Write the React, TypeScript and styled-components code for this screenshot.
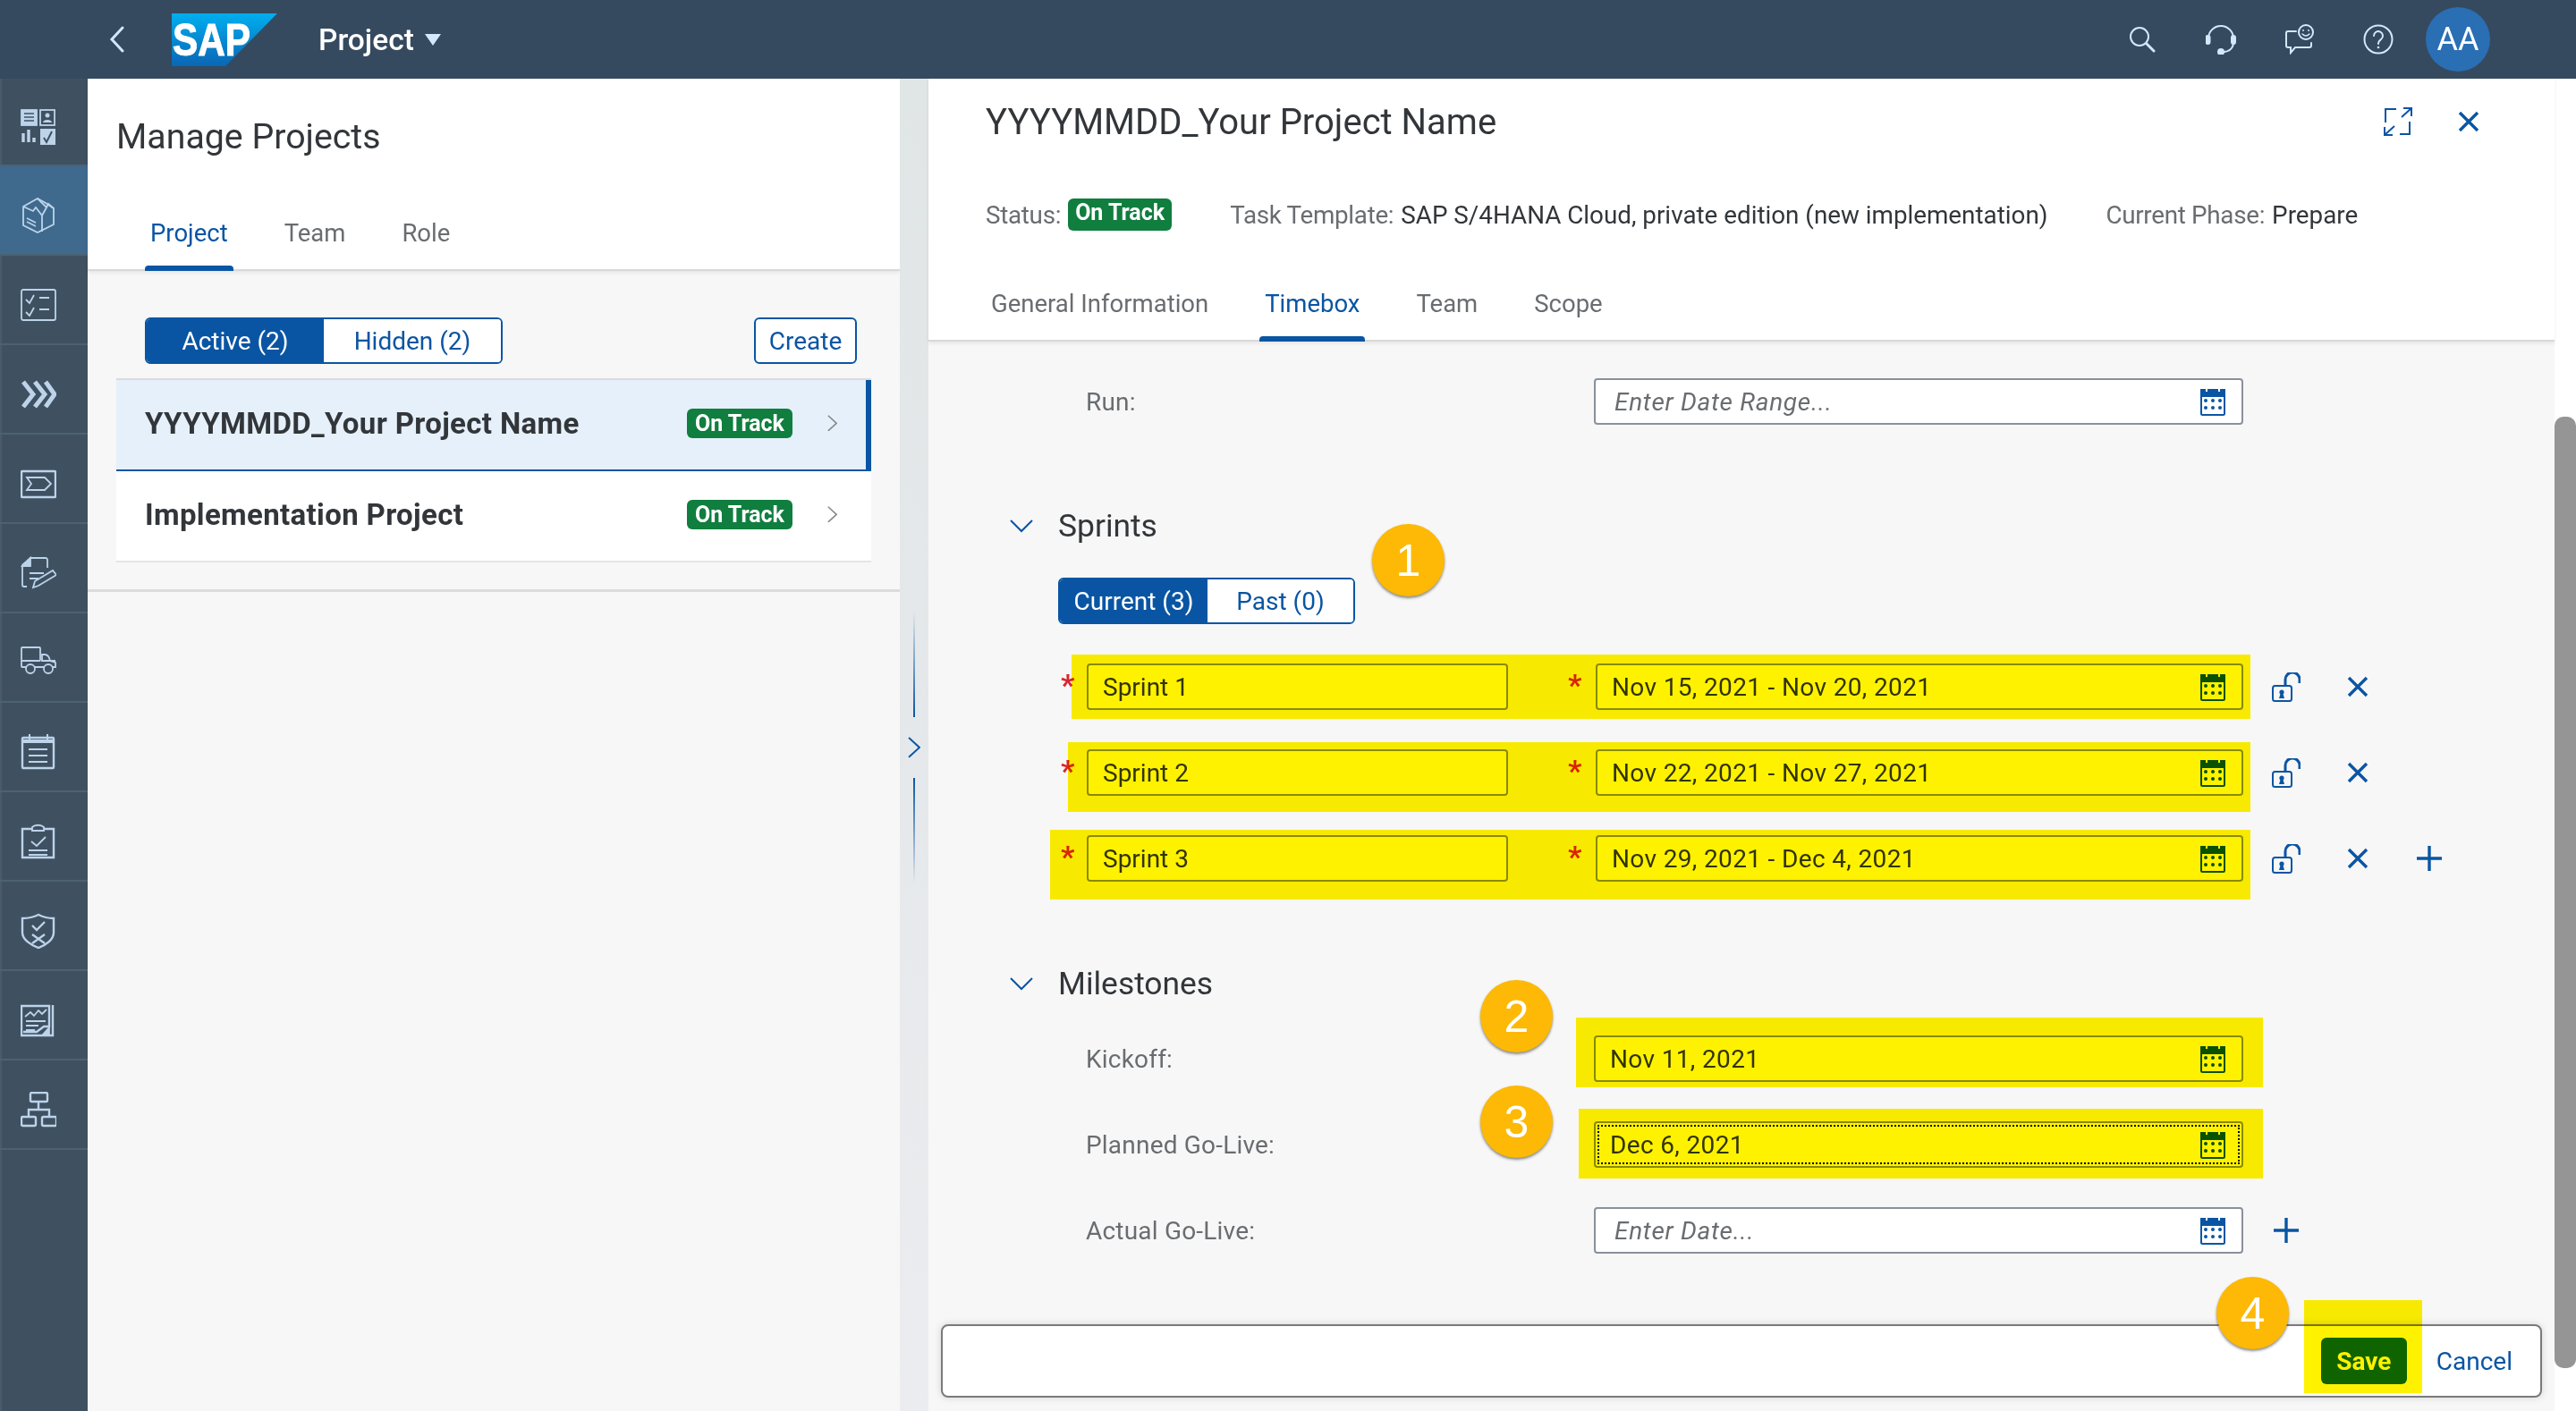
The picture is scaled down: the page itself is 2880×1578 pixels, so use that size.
import React from 'react'
import styled, { createGlobalStyle } from 'styled-components'

const GlobalStyle = createGlobalStyle`
    html, body {
        margin: 0;
        padding: 0;
        background: #fff;
    }
    body {
        font-family: Roboto, "Liberation Sans", sans-serif;
        color: #32363a;
    }
    * {
        box-sizing: border-box;
    }
`

const blue = '#0a55a3'
const grey = '#6a6d70'

const Page = styled.div`
    width: 2880px;
    height: 1578px;
    display: flex;
    flex-direction: column;
    overflow: hidden;
`

const ShellBar = styled.header`
    height: 88px;
    flex: none;
    display: flex;
    align-items: center;
    background: #354a5f;
    color: #d1e8ff;
`

const BackButton = styled.div`
    display: flex;
    margin-left: 122px;
    margin-right: 52px;
`

const ShellTitle = styled.span`
    margin-left: 46px;
    font-size: 33.5px;
    font-weight: 500;
    color: #fff;
`

const TitleCaret = styled.span`
    margin-left: 12px;
    width: 0;
    height: 0;
    border-left: 9px solid transparent;
    border-right: 9px solid transparent;
    border-top: 13px solid #d1e8ff;
`

const ShellActions = styled.div`
    margin-left: auto;
    display: flex;
    align-items: center;
    margin-right: 96px;
`

const ShellAction = styled.div`
    width: 88px;
    display: flex;
    justify-content: center;
`

const Avatar = styled.div`
    width: 72px;
    height: 72px;
    margin-left: 9px;
    border-radius: 50%;
    background: #2a6eb4;
    color: #fff;
    font-size: 36px;
    display: flex;
    align-items: center;
    justify-content: center;
`

const Workspace = styled.div`
    flex: 1;
    display: flex;
    min-height: 0;
`

const SideNav = styled.nav`
    width: 98px;
    flex: none;
    background: #3f5161;
    border-left: 2px solid #4a5c6b;
    color: #bcd3ea;
`

const NavItem = styled.div<{ $selected?: boolean; $tall?: boolean }>`
    height: ${(p) => (p.$tall ? 98 : 100)}px;
    margin-left: -2px;
    padding: 11px 16px 0 4px;
    display: flex;
    align-items: center;
    justify-content: center;
    background: ${(p) => (p.$selected ? '#3f6a8e' : 'transparent')};
    border-bottom: 2px solid #4c6273;
`

const ListPane = styled.section`
    width: 908px;
    flex: none;
    background: #f7f7f7;
`

const ListHeader = styled.div`
    height: 215px;
    background: #fff;
    border-bottom: 2px solid #d9d9d9;
    box-shadow: 0 2px 4px rgba(0, 0, 0, 0.08);
    padding: 0 32px;
    display: flex;
    flex-direction: column;
`

const ListTitle = styled.h1`
    margin: 41px 0 0;
    font-size: 39.3px;
    font-weight: 400;
    line-height: 48px;
`

const Tabs = styled.div<{ $offset: number }>`
    margin-top: auto;
    margin-left: ${(p) => p.$offset}px;
    display: flex;
    gap: 51px;
    margin-bottom: -2px;
`

const Tab = styled.div<{ $active?: boolean }>`
    position: relative;
    height: 64px;
    padding: 0 6px;
    font-size: 27.5px;
    line-height: 44px;
    color: ${(p) => (p.$active ? blue : grey)};

    &::after {
        content: "";
        display: ${(p) => (p.$active ? 'block' : 'none')};
        position: absolute;
        left: 0;
        right: 0;
        bottom: 0;
        height: 6px;
        background: ${blue};
        border-radius: 4px 4px 0 0;
    }
`

const ListBody = styled.div`
    height: 359px;
    padding: 52px 32px 0;
    border-bottom: 3px solid #dcdcdc;
`

const ListToolbar = styled.div`
    width: 844px;
    padding: 0 16px 16px 32px;
    border-bottom: 2px solid #dcdcdc;
    display: flex;
    justify-content: space-between;
`

const Segmented = styled.div`
    height: 52px;
    display: flex;
    border: 2px solid ${blue};
    border-radius: 6px;
    overflow: hidden;
    background: #fff;
`

const Segment = styled.div<{ $active?: boolean; $width: number }>`
    width: ${(p) => p.$width}px;
    display: flex;
    align-items: center;
    justify-content: center;
    font-size: 28px;
    color: ${(p) => (p.$active ? '#fff' : blue)};
    background: ${(p) => (p.$active ? blue : '#fff')};
`

const OutlineButton = styled.div`
    width: 115px;
    height: 52px;
    border: 2px solid ${blue};
    border-radius: 6px;
    background: #fff;
    color: ${blue};
    font-size: 28px;
    display: flex;
    align-items: center;
    justify-content: center;
`

const ProjectRow = styled.div<{ $selected?: boolean }>`
    width: 844px;
    height: 102px;
    padding-left: 32px;
    padding-right: ${(p) => (p.$selected ? 32 : 38)}px;
    padding-bottom: 4px;
    display: flex;
    align-items: center;
    font-size: 33px;
    letter-spacing: 0.35px;
    font-weight: 700;
    background: ${(p) => (p.$selected ? '#e5f0fa' : '#fff')};
    border-bottom: ${(p) => (p.$selected ? `2px solid ${blue}` : '2px solid #e5e5e5')};
    border-right: ${(p) => (p.$selected ? `6px solid ${blue}` : 'none')};
`

const StatusBadge = styled.span<{ $large?: boolean }>`
    height: ${(p) => (p.$large ? 36 : 33)}px;
    width: ${(p) => (p.$large ? 116 : 118)}px;
    padding-bottom: ${(p) => (p.$large ? 5 : 0)}px;
    border-radius: 6px;
    background: #107e3e;
    color: #fff;
    font-size: 25px;
    letter-spacing: 0;
    font-weight: 700;
    display: flex;
    align-items: center;
    justify-content: center;
    flex: none;
`

const RowChevron = styled.div`
    margin-left: 39px;
    color: #85888b;
    display: flex;
`

const ProjectName = styled.span`
    flex: 1;
`

const Splitter = styled.div`
    width: 32px;
    flex: none;
    background: linear-gradient(#e0e5e6, #ebecef);
    display: flex;
    flex-direction: column;
    align-items: center;
    padding-top: 596px;
    color: ${blue};
`

const SplitterLine = styled.div<{ $up?: boolean }>`
    width: 2px;
    height: 118px;
    background: linear-gradient(${(p) => (p.$up ? 'transparent' : blue)}, ${(p) => (p.$up ? blue : 'transparent')});
`

const SplitterIcon = styled.div`
    height: 68px;
    display: flex;
    align-items: center;
`

const DetailPane = styled.main`
    flex: 1;
    display: flex;
    min-width: 0;
`

const DetailColumn = styled.div`
    flex: 1;
    position: relative;
    background: #f7f7f7;
    min-width: 0;
`

const DetailHeader = styled.div`
    height: 294px;
    background: #fff;
    border-bottom: 2px solid #d9d9d9;
    box-shadow: 0 2px 4px rgba(0, 0, 0, 0.08);
    padding: 0 64px;
    display: flex;
    flex-direction: column;
`

const TitleRow = styled.div`
    margin-top: 24px;
    display: flex;
    align-items: center;
    height: 48px;
`

const DetailTitle = styled.h2`
    margin: 0;
    font-size: 40px;
    font-weight: 400;
    flex: 1;
`

const HeaderActions = styled.div`
    display: flex;
    gap: 50px;
    align-items: center;
    margin-right: 20px;
    color: ${blue};
`

const InfoRow = styled.div`
    margin-top: 62px;
    height: 36px;
    display: flex;
    align-items: center;
    font-size: 27.8px;
`

const InfoLabel = styled.span<{ $gap?: number }>`
    color: ${grey};
    letter-spacing: -0.3px;
    margin-left: ${(p) => p.$gap || 0}px;
    margin-right: 8px;
`

const Form = styled.div`
    padding: 41px 0 0 91px;
`

const FieldRow = styled.div<{ $mt?: number }>`
    position: relative;
    margin-left: 54px;
    margin-top: ${(p) => p.$mt || 0}px;
    height: 52px;
    display: flex;
    align-items: center;
`

const FieldLabel = styled.div`
    width: 599px;
    padding-left: 31px;
    font-size: 28px;
    letter-spacing: 0.2px;
    color: ${grey};
`

const Field = styled.div<{ $width: number; $focus?: boolean; $placeholder?: boolean }>`
    width: ${(p) => p.$width}px;
    height: 52px;
    flex: none;
    padding: 0 18px 0 ${(p) => (p.$placeholder ? 21 : 16)}px;
    background: #fff;
    border: 2px solid #89919a;
    border-radius: 4px;
    display: flex;
    align-items: center;
    justify-content: space-between;
    font-size: 28px;
    outline: ${(p) => (p.$focus ? '2px dotted #000' : 'none')};
    outline-offset: -6px;
`

const FieldText = styled.span<{ $placeholder?: boolean; $date?: boolean }>`
    color: ${(p) => (p.$placeholder ? grey : '#32363a')};
    font-style: ${(p) => (p.$placeholder ? 'italic' : 'normal')};
    letter-spacing: ${(p) => (p.$placeholder ? 0.7 : p.$date ? 0.35 : 0)}px;
`

const CalendarSlot = styled.div`
    display: flex;
    color: ${blue};
`

const Required = styled.span<{ $width: number }>`
    width: ${(p) => p.$width}px;
    flex: none;
    padding-left: 3px;
    color: #d9262c;
    font-size: 34px;
    font-weight: 700;
    line-height: 34px;
    height: 34px;
    margin-top: -5px;
`

const Spacer = styled.div<{ $width: number }>`
    width: ${(p) => p.$width}px;
    flex: none;
`

const Actions = styled.div`
    display: flex;
    align-items: center;
    margin-left: 8px;
    color: ${blue};
`

const ActionCell = styled.div`
    width: 80px;
    display: flex;
    justify-content: center;
    align-items: center;
`

const SectionTitle = styled.div<{ $mt: number }>`
    margin-top: ${(p) => p.$mt}px;
    height: 44px;
    display: flex;
    align-items: center;
    gap: 28px;
    font-size: 35.4px;
    color: #32363a;
`

const SectionChevron = styled.div`
    display: flex;
    color: ${blue};
`

const SegmentRow = styled.div`
    position: relative;
    margin: 36px 0 0 54px;
    width: 332px;
`

const Highlight = styled.div<{ $left: number; $top: number; $width: number; $height: number }>`
    position: absolute;
    left: ${(p) => p.$left}px;
    top: ${(p) => p.$top}px;
    width: ${(p) => p.$width}px;
    height: ${(p) => p.$height}px;
    background: #fff200;
    mix-blend-mode: multiply;
    pointer-events: none;
`

const StepBadge = styled.div<{ $left: number; $top: number }>`
    position: absolute;
    left: ${(p) => p.$left}px;
    top: ${(p) => p.$top}px;
    width: 81px;
    height: 81px;
    border-radius: 50%;
    background: #fdb905;
    box-shadow: 0 2px 3px rgba(0, 0, 0, 0.45);
    color: #fff;
    font-family: "Liberation Sans", Arial, sans-serif;
    font-size: 50px;
    display: flex;
    align-items: center;
    justify-content: center;
`

const Footer = styled.div`
    position: absolute;
    left: 14px;
    top: 1393px;
    width: 1790px;
    height: 82px;
    background: #fff;
    border: 2px solid #7a7a7a;
    border-radius: 8px;
    box-shadow: 0 0 8px rgba(0, 0, 0, 0.15);
    display: flex;
    align-items: center;
    justify-content: flex-end;
    padding-right: 31px;
`

const SaveButton = styled.div`
    width: 96px;
    height: 52px;
    border-radius: 6px;
    background: #1069c0;
    color: #fff;
    font-size: 28px;
    font-weight: 700;
    display: flex;
    align-items: center;
    justify-content: center;
`

const CancelButton = styled.div`
    margin-left: 33px;
    color: ${blue};
    font-size: 28px;
`

const ScrollTrack = styled.div`
    width: 24px;
    flex: none;
    background: #fff;
    padding-top: 378px;
`

const ScrollThumb = styled.div`
    height: 1064px;
    background: #959595;
    border-radius: 10px;
`

const SapLogo = () => (
    <svg width="118" height="59" viewBox="0 0 118 59">
        <defs>
            <linearGradient id="sapGrad" x1="0" y1="0" x2="0" y2="1">
                <stop offset="0" stopColor="#00aeef" />
                <stop offset="1" stopColor="#0a66b5" />
            </linearGradient>
        </defs>
        <polygon points="0,0 118,0 60,59 0,59" fill="url(#sapGrad)" />
        <text x="1" y="47" fill="#fff" stroke="#fff" strokeWidth="1" fontFamily="Liberation Sans, Arial, sans-serif" fontWeight="700" fontSize="50" textLength="87" lengthAdjust="spacingAndGlyphs">SAP</text>
    </svg>
)

const ChevronLeft = () => (
    <svg width="18" height="30" viewBox="0 0 18 30" fill="none" stroke="#d1e8ff" strokeWidth="3" strokeLinecap="round">
        <path d="M15 2 L3 15 L15 28" />
    </svg>
)

const SearchIcon = () => (
    <svg width="30" height="30" viewBox="0 0 30 30" fill="none" stroke="currentColor" strokeWidth="2" strokeLinecap="round">
        <circle cx="12" cy="12" r="10" />
        <path d="M20 20 L28 28" strokeWidth="3" />
    </svg>
)

const HeadsetIcon = () => (
    <svg width="34" height="34" viewBox="0 0 34 34" fill="none" stroke="currentColor" strokeWidth="2">
        <path d="M3 16 A14 14 0 0 1 31 16 V20 C31 27 26 31 20 31" />
        <rect x="0.5" y="13" width="4" height="9" rx="2" fill="currentColor" />
        <rect x="29" y="13" width="4" height="9" rx="2" fill="currentColor" />
        <circle cx="17" cy="31" r="3" fill="currentColor" />
    </svg>
)

const ChatIcon = () => (
    <svg width="34" height="34" viewBox="0 0 34 34" fill="none" stroke="currentColor" strokeWidth="2" strokeLinecap="round">
        <path d="M13 8 H4 A2 2 0 0 0 2 10 V24 A2 2 0 0 0 4 26 H7 V32 L12 26 H28 A2 2 0 0 0 30 24 V21" />
        <circle cx="24" cy="9" r="8" />
        <circle cx="21" cy="7" r="1" fill="currentColor" stroke="none" />
        <circle cx="27" cy="7" r="1" fill="currentColor" stroke="none" />
        <path d="M20 11 Q24 15 28 11" strokeWidth="1.5" />
    </svg>
)

const HelpIcon = () => (
    <svg width="34" height="34" viewBox="0 0 34 34" fill="none" stroke="currentColor" strokeWidth="2" strokeLinecap="round">
        <circle cx="17" cy="17" r="15.5" />
        <path d="M12 13 A5 5 0 1 1 20 17 C18 18.5 17 19.5 17 22" />
        <circle cx="17" cy="26" r="1.3" fill="currentColor" stroke="none" />
    </svg>
)

const ExpandIcon = () => (
    <svg width="34" height="34" viewBox="0 0 34 34" fill="none" stroke="currentColor" strokeWidth="2">
        <path d="M15 3 H3 V18 M19 31 H30 V17 M21 12 L32 2 M23 2 H32 V11 M2 32 L13 22 M2 23 V32 H11" />
    </svg>
)

const CloseIcon = () => (
    <svg width="24" height="24" viewBox="0 0 24 24" fill="none" stroke="currentColor" strokeWidth="3.4">
        <path d="M2 2 L22 22 M22 2 L2 22" />
    </svg>
)

const PlusIcon = () => (
    <svg width="30" height="30" viewBox="0 0 30 30" fill="none" stroke="currentColor" strokeWidth="3.4">
        <path d="M15 1 V29 M1 15 H29" />
    </svg>
)

const CalendarIcon = () => (
    <svg width="28" height="32" viewBox="0 0 28 32" fill="none" stroke="currentColor" strokeWidth="2">
        <rect x="1" y="3" width="26" height="28" rx="1.5" />
        <rect x="1" y="3" width="26" height="7" fill="currentColor" />
        <path d="M7 0 V5 M21 0 V5" stroke="#fff" strokeWidth="2" />
        <g fill="currentColor" stroke="none">
            <circle cx="6" cy="15" r="2" /><circle cx="14" cy="15" r="2" /><circle cx="22" cy="15" r="2" />
            <circle cx="6" cy="23" r="2" /><circle cx="14" cy="23" r="2" /><circle cx="22" cy="23" r="2" />
        </g>
    </svg>
)

const LockIcon = () => (
    <svg width="32" height="33" viewBox="0 0 32 33" fill="none" stroke="currentColor" strokeWidth="2">
        <rect x="1" y="15" width="21" height="17" rx="2.5" />
        <path d="M15 15 V8 A7.5 7.5 0 0 1 31 8 V12" strokeWidth="3" />
        <circle cx="11" cy="22" r="2.6" fill="currentColor" stroke="none" />
        <path d="M9.5 24 H12.5 L14 29 H8 Z" fill="currentColor" stroke="none" />
    </svg>
)

const ChevronDown = () => (
    <svg width="26" height="15" viewBox="0 0 26 15" fill="none" stroke="currentColor" strokeWidth="2">
        <path d="M1 1 L13 13 L25 1" />
    </svg>
)

const ChevronRight = ({ size = 14 }: { size?: number }) => (
    <svg width={size} height={size * 1.7} viewBox="0 0 14 24" fill="none" stroke="currentColor" strokeWidth="2">
        <path d="M1 1 L13 12 L1 23" />
    </svg>
)

const navIcons: React.ReactNode[] = [
    <>
        <rect x="1" y="1" width="17" height="17" fill="currentColor" />
        <path d="M4 5 H15 M4 9 H15 M4 13 H15" stroke="#3f5161" strokeWidth="1.6" />
        <rect x="22" y="1" width="16" height="17" />
        <circle cx="30" cy="7" r="2.5" fill="currentColor" stroke="none" />
        <path d="M25 15 C25 11 35 11 35 15 Z" fill="currentColor" stroke="none" />
        <path d="M3 37 V27 M9 37 V23 M15 37 V32" strokeWidth="3.4" />
        <rect x="22" y="22" width="17" height="18" fill="currentColor" stroke="none" />
        <path d="M26 32 L29 37 L35 25" stroke="#3f5161" strokeWidth="2" />
    </>,
    <>
        <path d="M3 10 L19 1 L28 6 L37 12 V30 L19 39 L3 31 Z" />
        <path d="M3 10 L14 15 L17 11 L24 20 V38 M19 1 L29 11 L31 7 L37 12 M29 11 L24 20" />
        <path d="M7 23 L17 28 M7 27 L17 32" strokeWidth="1.4" />
    </>,
    <>
        <rect x="1" y="3" width="38" height="34" rx="2" />
        <path d="M6 14 L10 18 L15 9 M6 28 L10 32 L15 23 M21 12 H32 M21 25 H32" />
    </>,
    <path d="M3 6 L14 20 L3 34 M16 6 L27 20 L16 34 M28 6 L38 20 L28 34" strokeWidth="5" />,
    <>
        <rect x="1" y="6" width="38" height="29" rx="1" strokeWidth="2.4" />
        <path d="M7 13 H27 L34 20 L27 27 H7 L12 20 Z" />
    </>,
    <>
        <path d="M30 14 V5 A2 2 0 0 0 28 3 H11 L2 11 V33 A2 2 0 0 0 4 35 H7" />
        <path d="M11 3 L2 12 H11 Z" fill="currentColor" />
        <path d="M10 20 H26 M10 26 H20" />
        <path d="M14 36 L16 29 L36 17 L40 22 L20 34 Z" />
    </>,
    <>
        <rect x="1" y="3" width="21" height="15" rx="1" />
        <path d="M1 18 V24 A1 1 0 0 0 2 25 H6 M16 25 H27 M36 25 H39 V20 L33 18 C32 13 30 11 27 11 H24 V18 H39" />
        <circle cx="11" cy="27" r="5" />
        <circle cx="31" cy="27" r="5" />
    </>,
    <>
        <rect x="2" y="4" width="35" height="34" rx="1" strokeWidth="2.4" />
        <path d="M2 8 H37" strokeWidth="4" />
        <path d="M10 0 V7 M30 0 V7" strokeWidth="2" />
        <path d="M9 17 H30 M9 24 H30 M9 31 H30" />
    </>,
    <>
        <path d="M13 6 H2 V38 H37 V6 H26" strokeWidth="2.4" />
        <path d="M13 8 V4 C16 1 23 1 26 4 V8 Z" />
        <path d="M12 20 L18 25 L28 15 M9 30 H30 M9 35 H30" />
    </>,
    <>
        <path d="M20 2 C26 5 32 6 37 6 V22 C37 30 28 36 20 39 C12 36 2 30 2 22 V6 C8 6 14 5 20 2 Z" strokeWidth="2.4" />
        <path d="M13 14 L18 19 L27 10 M13 24 L27 34 M27 24 L13 34" strokeWidth="2.4" />
    </>,
    <>
        <path d="M36 3 V37 H1 V4 H32 V27 H26 L18 33 H3" strokeWidth="2.4" />
        <path d="M5 16 L11 11 L15 15 L20 9 L24 13 L29 8 M6 21 H28 M6 26 H20 M6 31 H16" />
        <path d="M24 37 L32 28 V37 Z" fill="currentColor" />
    </>,
    <>
        <rect x="11" y="1" width="19" height="10" rx="1.5" strokeWidth="2.4" />
        <rect x="1" y="28" width="16" height="10" rx="1.5" strokeWidth="2.4" />
        <rect x="24" y="28" width="16" height="10" rx="1.5" strokeWidth="2.4" />
        <path d="M20 11 V20 M9 28 V20 H32 V28" strokeWidth="2.4" />
    </>,
]

const NavIcon = ({ children }: { children: React.ReactNode }) => (
    <svg width="40" height="40" viewBox="0 0 40 40" fill="none" stroke="currentColor" strokeWidth="1.8">
        {children}
    </svg>
)

const sprints = [
    { name: 'Sprint 1', range: 'Nov 15, 2021 - Nov 20, 2021', hl: { left: 15, top: -10, width: 1318, height: 72 } },
    { name: 'Sprint 2', range: 'Nov 22, 2021 - Nov 27, 2021', hl: { left: 11, top: -8, width: 1322, height: 78 } },
    { name: 'Sprint 3', range: 'Nov 29, 2021 - Dec 4, 2021', hl: { left: -9, top: -6, width: 1342, height: 78 } },
]

function DateField({ text, placeholder, width = 726, focus }: { text: string; placeholder?: boolean; width?: number; focus?: boolean }) {
    return (
        <Field $width={width} $placeholder={placeholder} $focus={focus}>
            <FieldText $placeholder={placeholder} $date>{text}</FieldText>
            <CalendarSlot><CalendarIcon /></CalendarSlot>
        </Field>
    )
}

function App() {
    return (
        <Page>
            <GlobalStyle />
            <ShellBar>
                <BackButton><ChevronLeft /></BackButton>
                <SapLogo />
                <ShellTitle>Project</ShellTitle>
                <TitleCaret />
                <ShellActions>
                    <ShellAction><SearchIcon /></ShellAction>
                    <ShellAction><HeadsetIcon /></ShellAction>
                    <ShellAction><ChatIcon /></ShellAction>
                    <ShellAction><HelpIcon /></ShellAction>
                    <Avatar>AA</Avatar>
                </ShellActions>
            </ShellBar>
            <Workspace>
                <SideNav>
                    {navIcons.map((icon, i) => (
                        <NavItem key={i} $tall={i === 0} $selected={i === 1}>
                            <NavIcon>{icon}</NavIcon>
                        </NavItem>
                    ))}
                </SideNav>
                <ListPane>
                    <ListHeader>
                        <ListTitle>Manage Projects</ListTitle>
                        <Tabs $offset={32}>
                            <Tab $active>Project</Tab>
                            <Tab>Team</Tab>
                            <Tab>Role</Tab>
                        </Tabs>
                    </ListHeader>
                    <ListBody>
                        <ListToolbar>
                            <Segmented>
                                <Segment $active $width={198}>Active (2)</Segment>
                                <Segment $width={198}>Hidden (2)</Segment>
                            </Segmented>
                            <OutlineButton>Create</OutlineButton>
                        </ListToolbar>
                        <ProjectRow $selected>
                            <ProjectName>YYYYMMDD_Your Project Name</ProjectName>
                            <StatusBadge>On Track</StatusBadge>
                            <RowChevron><ChevronRight size={11} /></RowChevron>
                        </ProjectRow>
                        <ProjectRow>
                            <ProjectName>Implementation Project</ProjectName>
                            <StatusBadge>On Track</StatusBadge>
                            <RowChevron><ChevronRight size={11} /></RowChevron>
                        </ProjectRow>
                    </ListBody>
                </ListPane>
                <Splitter>
                    <SplitterLine $up />
                    <SplitterIcon><ChevronRight /></SplitterIcon>
                    <SplitterLine />
                </Splitter>
                <DetailPane>
                    <DetailColumn>
                        <DetailHeader>
                            <TitleRow>
                                <DetailTitle>YYYYMMDD_Your Project Name</DetailTitle>
                                <HeaderActions>
                                    <ExpandIcon />
                                    <CloseIcon />
                                </HeaderActions>
                            </TitleRow>
                            <InfoRow>
                                <InfoLabel>Status:</InfoLabel>
                                <StatusBadge $large>On Track</StatusBadge>
                                <InfoLabel $gap={65}>Task Template:</InfoLabel>
                                <span>SAP S/4HANA Cloud, private edition (new implementation)</span>
                                <InfoLabel $gap={65}>Current Phase:</InfoLabel>
                                <span>Prepare</span>
                            </InfoRow>
                            <Tabs $offset={0}>
                                <Tab>General Information</Tab>
                                <Tab $active>Timebox</Tab>
                                <Tab>Team</Tab>
                                <Tab>Scope</Tab>
                            </Tabs>
                        </DetailHeader>
                        <Form>
                            <FieldRow>
                                <FieldLabel>Run:</FieldLabel>
                                <DateField text="Enter Date Range..." placeholder />
                            </FieldRow>
                            <SectionTitle $mt={91}>
                                <SectionChevron><ChevronDown /></SectionChevron>
                                Sprints
                            </SectionTitle>
                            <SegmentRow>
                                <Segmented>
                                    <Segment $active $width={167}>Current (3)</Segment>
                                    <Segment $width={165}>Past (0)</Segment>
                                </Segmented>
                                <StepBadge $left={351} $top={-60}>1</StepBadge>
                            </SegmentRow>
                            {sprints.map((s, i) => (
                                <FieldRow key={s.name} $mt={44}>
                                    <Required $width={32}>*</Required>
                                    <Field $width={471}><FieldText>{s.name}</FieldText></Field>
                                    <Spacer $width={64} />
                                    <Required $width={34}>*</Required>
                                    <DateField text={s.range} width={724} />
                                    <Actions>
                                        <ActionCell><LockIcon /></ActionCell>
                                        <ActionCell><CloseIcon /></ActionCell>
                                        {i === 2 && <ActionCell><PlusIcon /></ActionCell>}
                                    </Actions>
                                    <Highlight $left={s.hl.left} $top={s.hl.top} $width={s.hl.width} $height={s.hl.height} />
                                </FieldRow>
                            ))}
                            <SectionTitle $mt={92}>
                                <SectionChevron><ChevronDown /></SectionChevron>
                                Milestones
                            </SectionTitle>
                            <FieldRow $mt={36}>
                                <FieldLabel>Kickoff:</FieldLabel>
                                <DateField text="Nov 11, 2021" />
                                <Highlight $left={579} $top={-20} $width={768} $height={78} />
                                <StepBadge $left={472} $top={-62}>2</StepBadge>
                            </FieldRow>
                            <FieldRow $mt={44}>
                                <FieldLabel>Planned Go-Live:</FieldLabel>
                                <DateField text="Dec 6, 2021" focus />
                                <Highlight $left={582} $top={-14} $width={765} $height={78} />
                                <StepBadge $left={472} $top={-40}>3</StepBadge>
                            </FieldRow>
                            <FieldRow $mt={44}>
                                <FieldLabel>Actual Go-Live:</FieldLabel>
                                <DateField text="Enter Date..." placeholder />
                                <Actions>
                                    <ActionCell><PlusIcon /></ActionCell>
                                </Actions>
                            </FieldRow>
                        </Form>
                        <Footer>
                            <SaveButton>Save</SaveButton>
                            <CancelButton>Cancel</CancelButton>
                            <Highlight $left={1522} $top={-29} $width={132} $height={104} />
                            <StepBadge $left={1424} $top={-55}>4</StepBadge>
                        </Footer>
                    </DetailColumn>
                    <ScrollTrack><ScrollThumb /></ScrollTrack>
                </DetailPane>
            </Workspace>
        </Page>
    )
}

export default App
